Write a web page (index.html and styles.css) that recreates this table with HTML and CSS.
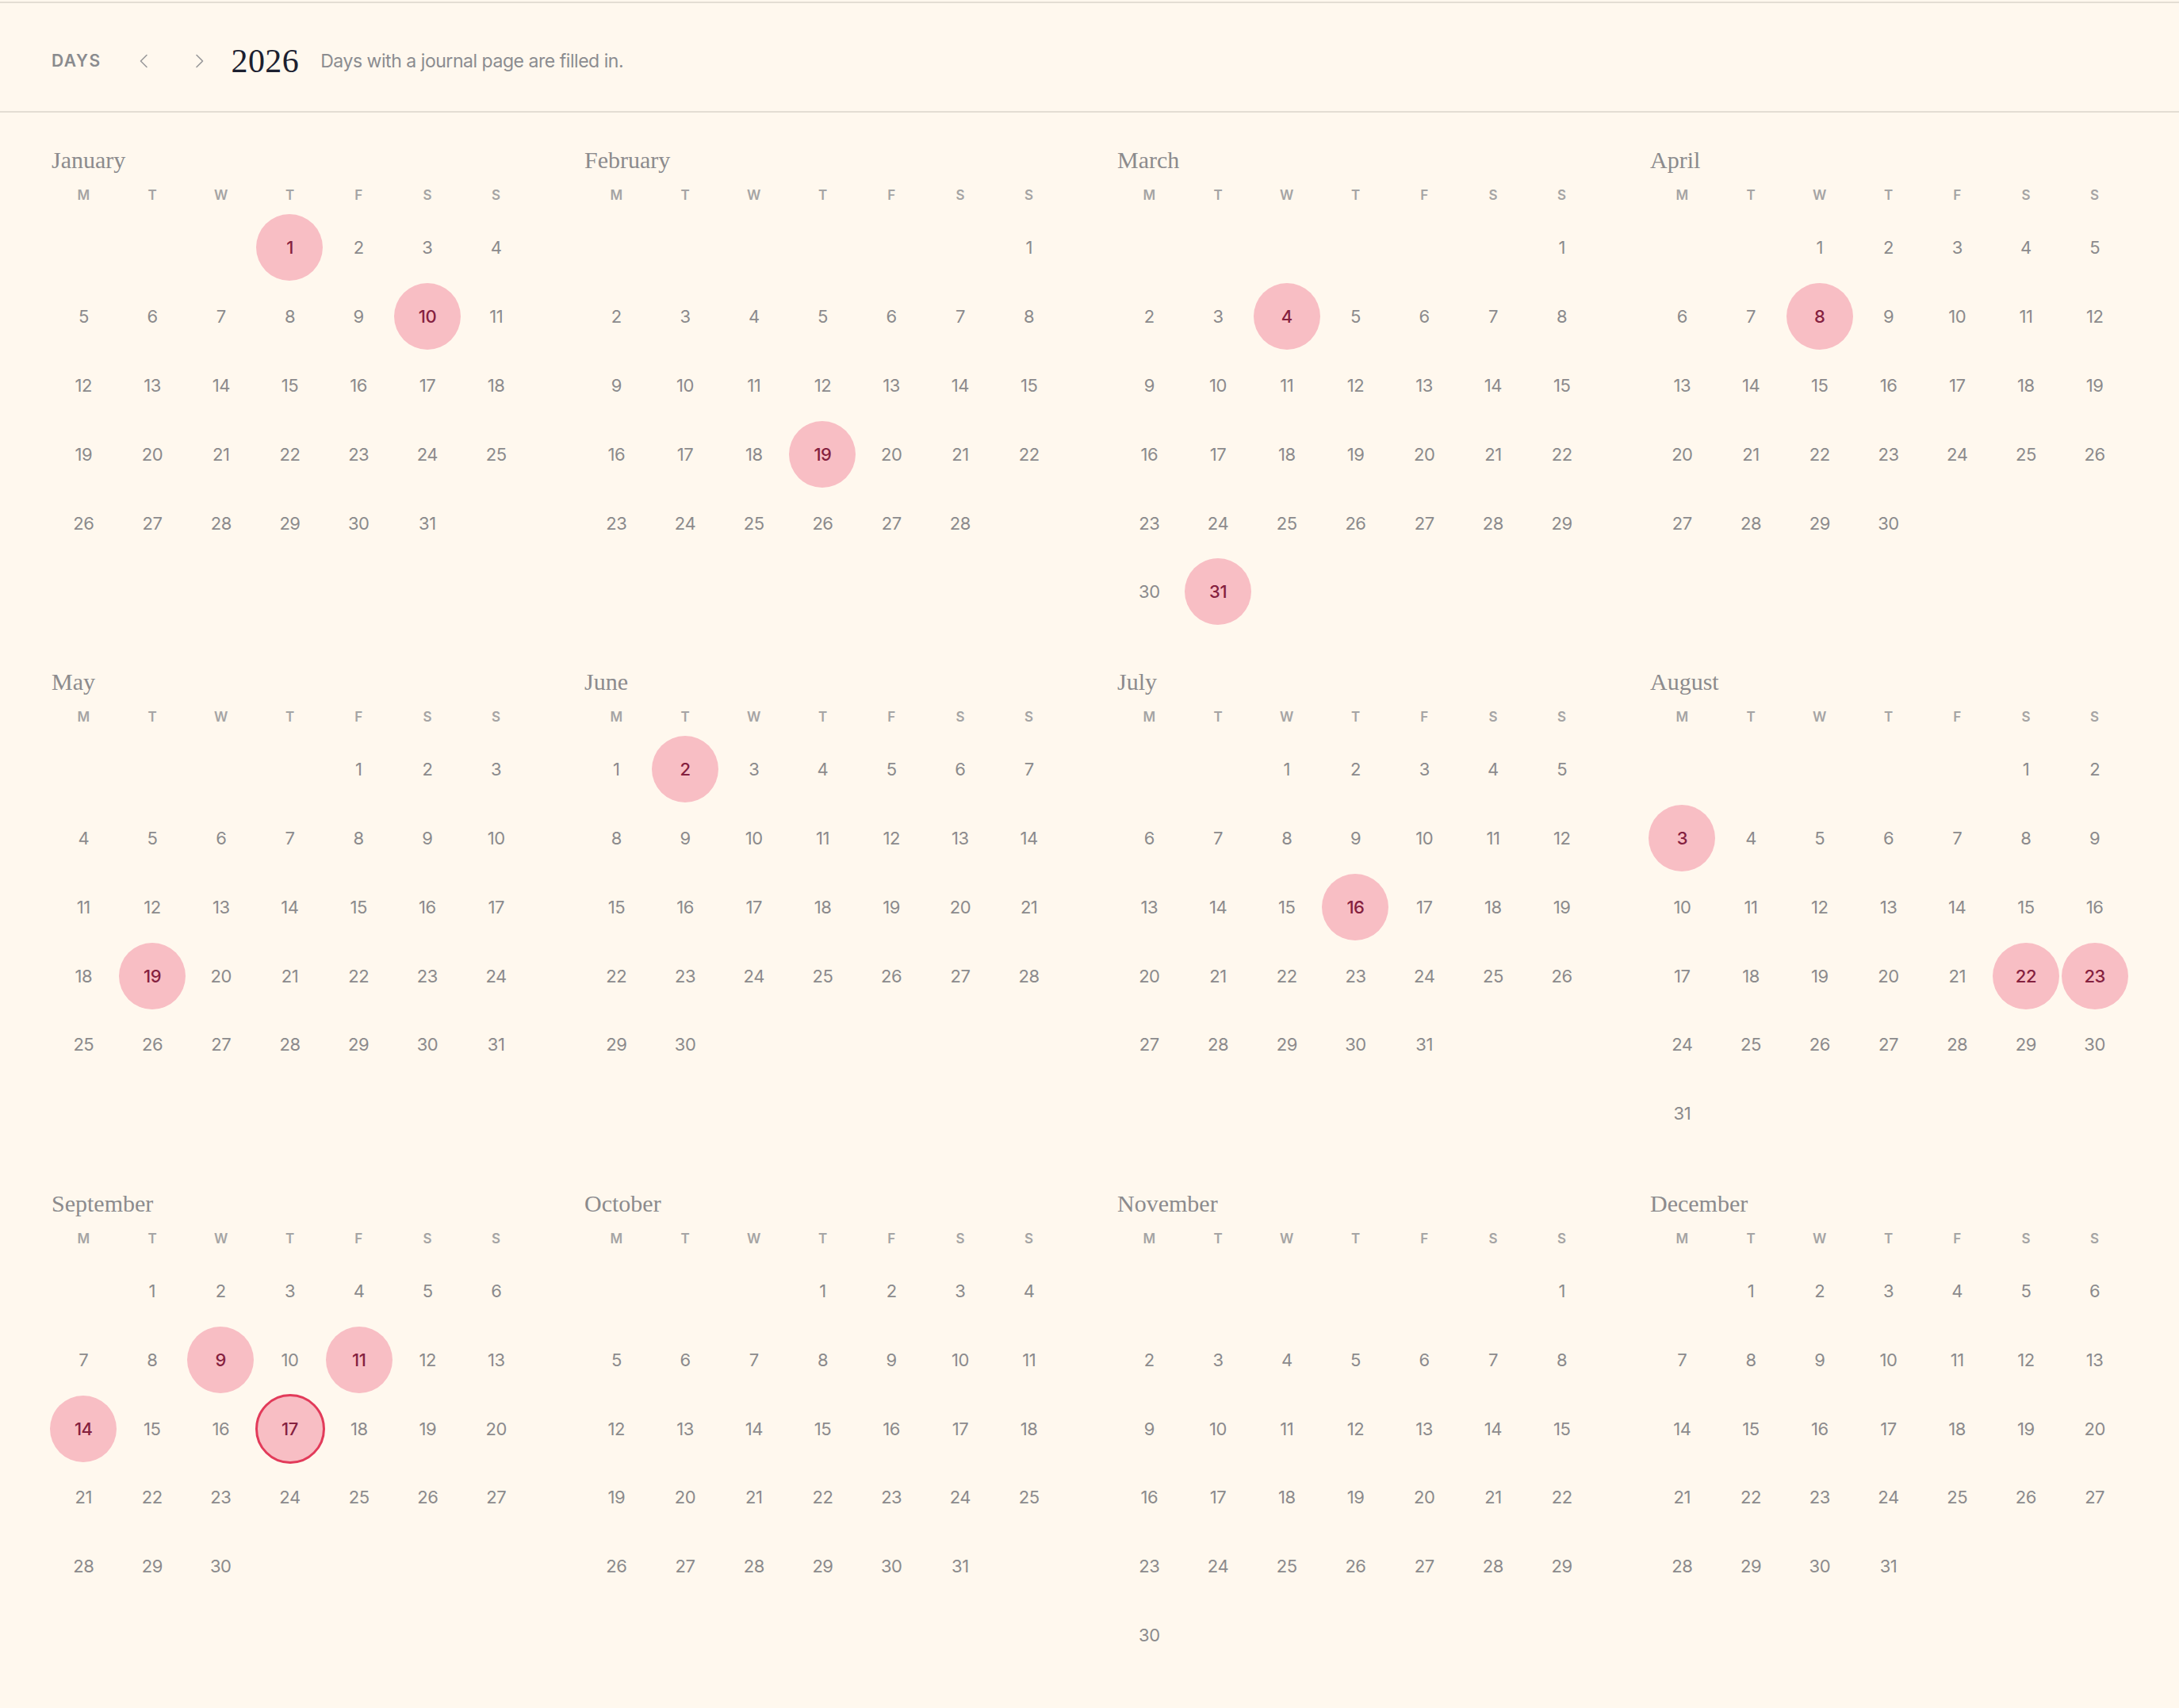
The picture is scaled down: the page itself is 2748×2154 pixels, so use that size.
FILE: index.html
```html
<!DOCTYPE html>
<html lang="en">
<head>
<meta charset="utf-8">
<title>Days 2026</title>
<link rel="stylesheet" href="styles.css">
</head>
<body>
<header class="bar">
  <span class="kicker">DAYS</span>
  <button class="nav prev" aria-label="Previous year"><svg viewBox="0 0 12 18" width="12" height="18"><path d="M10 1.5 L2.5 9 L10 16.5" /></svg></button>
  <button class="nav next" aria-label="Next year"><svg viewBox="0 0 12 18" width="12" height="18"><path d="M2 1.5 L9.5 9 L2 16.5" /></svg></button>
  <h1 class="year">2026</h1>
  <p class="hint">Days with a journal page are filled in.</p>
</header>
<main class="months">
  <section class="month">
    <h2>January</h2>
    <div class="wk"><span>M</span><span>T</span><span>W</span><span>T</span><span>F</span><span>S</span><span>S</span></div>
    <ol class="days s3"><li class="on"><b>1</b></li><li>2</li><li>3</li><li>4</li><li>5</li><li>6</li><li>7</li><li>8</li><li>9</li><li class="on"><b>10</b></li><li>11</li><li>12</li><li>13</li><li>14</li><li>15</li><li>16</li><li>17</li><li>18</li><li>19</li><li>20</li><li>21</li><li>22</li><li>23</li><li>24</li><li>25</li><li>26</li><li>27</li><li>28</li><li>29</li><li>30</li><li>31</li></ol>
  </section>
  <section class="month">
    <h2>February</h2>
    <div class="wk"><span>M</span><span>T</span><span>W</span><span>T</span><span>F</span><span>S</span><span>S</span></div>
    <ol class="days s6"><li>1</li><li>2</li><li>3</li><li>4</li><li>5</li><li>6</li><li>7</li><li>8</li><li>9</li><li>10</li><li>11</li><li>12</li><li>13</li><li>14</li><li>15</li><li>16</li><li>17</li><li>18</li><li class="on"><b>19</b></li><li>20</li><li>21</li><li>22</li><li>23</li><li>24</li><li>25</li><li>26</li><li>27</li><li>28</li></ol>
  </section>
  <section class="month">
    <h2>March</h2>
    <div class="wk"><span>M</span><span>T</span><span>W</span><span>T</span><span>F</span><span>S</span><span>S</span></div>
    <ol class="days s6"><li>1</li><li>2</li><li>3</li><li class="on"><b>4</b></li><li>5</li><li>6</li><li>7</li><li>8</li><li>9</li><li>10</li><li>11</li><li>12</li><li>13</li><li>14</li><li>15</li><li>16</li><li>17</li><li>18</li><li>19</li><li>20</li><li>21</li><li>22</li><li>23</li><li>24</li><li>25</li><li>26</li><li>27</li><li>28</li><li>29</li><li>30</li><li class="on"><b>31</b></li></ol>
  </section>
  <section class="month">
    <h2>April</h2>
    <div class="wk"><span>M</span><span>T</span><span>W</span><span>T</span><span>F</span><span>S</span><span>S</span></div>
    <ol class="days s2"><li>1</li><li>2</li><li>3</li><li>4</li><li>5</li><li>6</li><li>7</li><li class="on"><b>8</b></li><li>9</li><li>10</li><li>11</li><li>12</li><li>13</li><li>14</li><li>15</li><li>16</li><li>17</li><li>18</li><li>19</li><li>20</li><li>21</li><li>22</li><li>23</li><li>24</li><li>25</li><li>26</li><li>27</li><li>28</li><li>29</li><li>30</li></ol>
  </section>
  <section class="month">
    <h2>May</h2>
    <div class="wk"><span>M</span><span>T</span><span>W</span><span>T</span><span>F</span><span>S</span><span>S</span></div>
    <ol class="days s4"><li>1</li><li>2</li><li>3</li><li>4</li><li>5</li><li>6</li><li>7</li><li>8</li><li>9</li><li>10</li><li>11</li><li>12</li><li>13</li><li>14</li><li>15</li><li>16</li><li>17</li><li>18</li><li class="on"><b>19</b></li><li>20</li><li>21</li><li>22</li><li>23</li><li>24</li><li>25</li><li>26</li><li>27</li><li>28</li><li>29</li><li>30</li><li>31</li></ol>
  </section>
  <section class="month">
    <h2>June</h2>
    <div class="wk"><span>M</span><span>T</span><span>W</span><span>T</span><span>F</span><span>S</span><span>S</span></div>
    <ol class="days s0"><li>1</li><li class="on"><b>2</b></li><li>3</li><li>4</li><li>5</li><li>6</li><li>7</li><li>8</li><li>9</li><li>10</li><li>11</li><li>12</li><li>13</li><li>14</li><li>15</li><li>16</li><li>17</li><li>18</li><li>19</li><li>20</li><li>21</li><li>22</li><li>23</li><li>24</li><li>25</li><li>26</li><li>27</li><li>28</li><li>29</li><li>30</li></ol>
  </section>
  <section class="month">
    <h2>July</h2>
    <div class="wk"><span>M</span><span>T</span><span>W</span><span>T</span><span>F</span><span>S</span><span>S</span></div>
    <ol class="days s2"><li>1</li><li>2</li><li>3</li><li>4</li><li>5</li><li>6</li><li>7</li><li>8</li><li>9</li><li>10</li><li>11</li><li>12</li><li>13</li><li>14</li><li>15</li><li class="on"><b>16</b></li><li>17</li><li>18</li><li>19</li><li>20</li><li>21</li><li>22</li><li>23</li><li>24</li><li>25</li><li>26</li><li>27</li><li>28</li><li>29</li><li>30</li><li>31</li></ol>
  </section>
  <section class="month">
    <h2>August</h2>
    <div class="wk"><span>M</span><span>T</span><span>W</span><span>T</span><span>F</span><span>S</span><span>S</span></div>
    <ol class="days s5"><li>1</li><li>2</li><li class="on"><b>3</b></li><li>4</li><li>5</li><li>6</li><li>7</li><li>8</li><li>9</li><li>10</li><li>11</li><li>12</li><li>13</li><li>14</li><li>15</li><li>16</li><li>17</li><li>18</li><li>19</li><li>20</li><li>21</li><li class="on"><b>22</b></li><li class="on"><b>23</b></li><li>24</li><li>25</li><li>26</li><li>27</li><li>28</li><li>29</li><li>30</li><li>31</li></ol>
  </section>
  <section class="month">
    <h2>September</h2>
    <div class="wk"><span>M</span><span>T</span><span>W</span><span>T</span><span>F</span><span>S</span><span>S</span></div>
    <ol class="days s1"><li>1</li><li>2</li><li>3</li><li>4</li><li>5</li><li>6</li><li>7</li><li>8</li><li class="on"><b>9</b></li><li>10</li><li class="on"><b>11</b></li><li>12</li><li>13</li><li class="on"><b>14</b></li><li>15</li><li>16</li><li class="on today"><b>17</b></li><li>18</li><li>19</li><li>20</li><li>21</li><li>22</li><li>23</li><li>24</li><li>25</li><li>26</li><li>27</li><li>28</li><li>29</li><li>30</li></ol>
  </section>
  <section class="month">
    <h2>October</h2>
    <div class="wk"><span>M</span><span>T</span><span>W</span><span>T</span><span>F</span><span>S</span><span>S</span></div>
    <ol class="days s3"><li>1</li><li>2</li><li>3</li><li>4</li><li>5</li><li>6</li><li>7</li><li>8</li><li>9</li><li>10</li><li>11</li><li>12</li><li>13</li><li>14</li><li>15</li><li>16</li><li>17</li><li>18</li><li>19</li><li>20</li><li>21</li><li>22</li><li>23</li><li>24</li><li>25</li><li>26</li><li>27</li><li>28</li><li>29</li><li>30</li><li>31</li></ol>
  </section>
  <section class="month">
    <h2>November</h2>
    <div class="wk"><span>M</span><span>T</span><span>W</span><span>T</span><span>F</span><span>S</span><span>S</span></div>
    <ol class="days s6"><li>1</li><li>2</li><li>3</li><li>4</li><li>5</li><li>6</li><li>7</li><li>8</li><li>9</li><li>10</li><li>11</li><li>12</li><li>13</li><li>14</li><li>15</li><li>16</li><li>17</li><li>18</li><li>19</li><li>20</li><li>21</li><li>22</li><li>23</li><li>24</li><li>25</li><li>26</li><li>27</li><li>28</li><li>29</li><li>30</li></ol>
  </section>
  <section class="month">
    <h2>December</h2>
    <div class="wk"><span>M</span><span>T</span><span>W</span><span>T</span><span>F</span><span>S</span><span>S</span></div>
    <ol class="days s1"><li>1</li><li>2</li><li>3</li><li>4</li><li>5</li><li>6</li><li>7</li><li>8</li><li>9</li><li>10</li><li>11</li><li>12</li><li>13</li><li>14</li><li>15</li><li>16</li><li>17</li><li>18</li><li>19</li><li>20</li><li>21</li><li>22</li><li>23</li><li>24</li><li>25</li><li>26</li><li>27</li><li>28</li><li>29</li><li>30</li><li>31</li></ol>
  </section>
</main>
</body>
</html>
```

FILE: styles.css
```css
html, body {
  margin: 0;
  padding: 0;
  background: #fff8ee;
}
body {
  font-family: Inter, "Noto Sans", sans-serif;
  color: #8b8a8c;
}

/* header bar */
.bar {
  margin-top: 2px;
  height: 140px;
  box-sizing: border-box;
  border-top: 2px solid #e3ddd3;
  border-bottom: 2px solid #e3ddd3;
  padding: 9px 64px 0 65px;
  display: flex;
  align-items: center;
}
.kicker {
  font-size: 21px;
  font-weight: 600;
  letter-spacing: 0.07em;
  color: #8a8b8e;
  margin-right: 41px;
}
.nav {
  width: 24px;
  height: 40px;
  padding: 0;
  border: 0;
  background: none;
  display: flex;
  align-items: center;
  justify-content: center;
  cursor: pointer;
}
.nav svg path {
  fill: none;
  stroke: #9a999b;
  stroke-width: 1.6;
  stroke-linecap: round;
  stroke-linejoin: round;
}
.prev { margin-right: 47px; }
.next { margin-right: 28px; }
.year {
  margin: 0 27px 0 0;
  font-family: "Liberation Serif", "DejaVu Serif", serif;
  font-weight: 400;
  font-size: 42px;
  letter-spacing: 0.01em;
  color: #1c2030;
  line-height: 1;
}
.hint {
  margin: 0;
  font-size: 23px;
  letter-spacing: -0.02em;
  color: #8b8c90;
}

/* year grid */
.months {
  padding: 40px 63px 40px 62px;
  display: grid;
  grid-template-columns: repeat(4, 1fr);
  column-gap: 65px;
  row-gap: 50px;
  align-items: start;
}
.month h2 {
  margin: 0 0 12px 3px;
  height: 40px;
  line-height: 40px;
  font-family: "Liberation Serif", "DejaVu Serif", serif;
  font-weight: 400;
  font-size: 30px;
  color: #8c8b8d;
}
.wk {
  display: grid;
  grid-template-columns: repeat(7, 1fr);
  height: 24px;
  line-height: 24px;
  margin-bottom: 11px;
  font-size: 17px;
  font-weight: 600;
  color: #a5a4a4;
  text-align: center;
}
.days {
  list-style: none;
  margin: 0;
  padding: 0;
  display: grid;
  grid-template-columns: repeat(7, 1fr);
  grid-template-rows: repeat(6, 86.8px);
  font-size: 22px;
  letter-spacing: -0.02em;
}
.days li {
  display: flex;
  align-items: center;
  justify-content: center;
}
.s1 li:first-child { grid-column-start: 2; }
.s2 li:first-child { grid-column-start: 3; }
.s3 li:first-child { grid-column-start: 4; }
.s4 li:first-child { grid-column-start: 5; }
.s5 li:first-child { grid-column-start: 6; }
.s6 li:first-child { grid-column-start: 7; }

.days li b {
  width: 84px;
  height: 84px;
  flex: none;
  border-radius: 50%;
  background: #f8bec4;
  color: #85213f;
  font-weight: 500;
  display: flex;
  align-items: center;
  justify-content: center;
}
.days li.today b {
  width: 88px;
  height: 88px;
  box-sizing: border-box;
  border: 3px solid #e23b5a;
}
```
